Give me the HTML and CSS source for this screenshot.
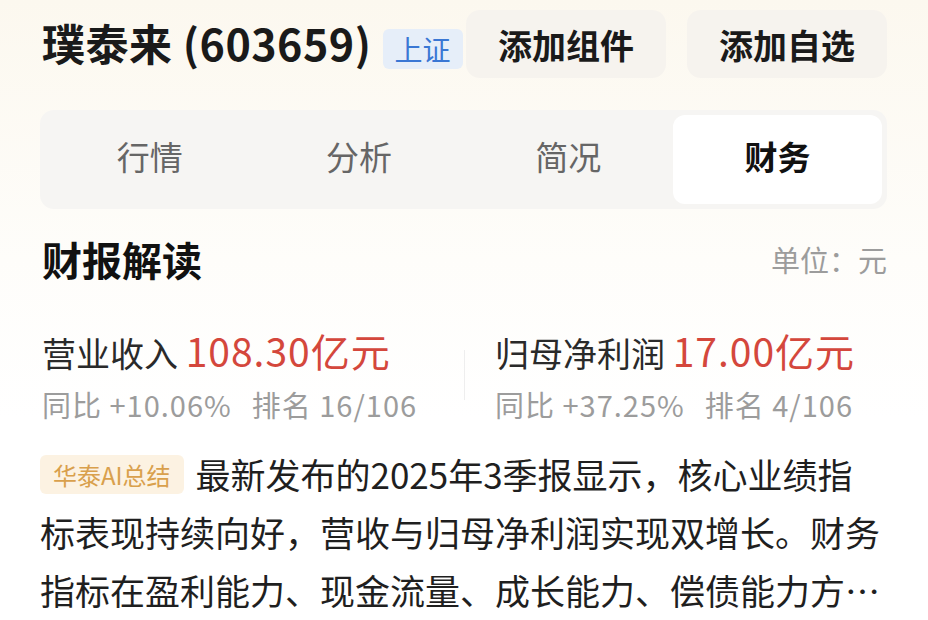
FILE: index.html
```html
<!doctype html>
<html lang="zh">
<head>
    <meta charset="utf-8">
    <title>璞泰来 财务</title>
    <link rel="stylesheet" href="styles.css">
</head>
<body>
	<div id="pagina">
		<div class="cabecera">
			<h1 class="nombre">璞泰来 (603659)</h1>
			<span class="mercado">上证</span>
			<div class="acciones">
				<button class="boton">添加组件</button>
				<button class="boton">添加自选</button>
			</div>
		</div>

		<div class="pestanas">
			<div class="pestana">行情</div>
			<div class="pestana">分析</div>
			<div class="pestana">简况</div>
			<div class="pestana activa">财务</div>
		</div>

		<div class="seccion">
			<h2>财报解读</h2>
			<span class="unidad">单位：元</span>
		</div>

		<div class="metricas">
			<div class="metrica">
				<div class="linea">营业收入 <span class="valor">108.30亿元</span></div>
				<div class="detalle"><span class="dato">同比 +10.06%</span>排名 16/106</div>
			</div>
			<div class="separador"></div>
			<div class="metrica derecha">
				<div class="linea">归母净利润 <span class="valor">17.00亿元</span></div>
				<div class="detalle"><span class="dato">同比 +37.25%</span>排名 4/106</div>
			</div>
		</div>

		<p class="resumen"><span class="etiqueta">华泰AI总结</span> 最新发布的2025年3季报显示，核心业绩指标表现持续向好，营收与归母净利润实现双增长。财务指标在盈利能力、现金流量、成长能力、偿债能力方面表现良好，整体经营稳健。</p>
	</div>
</body>
</html>
```

FILE: styles.css
```css
body{
	margin: 0;
	background: linear-gradient(#fcf8ef, #fefdfa 260px, #ffffff 420px);
	font-family: "Noto Sans CJK SC", "Noto Sans", sans-serif;
	color: #1f1f1f;
}
#pagina{
	padding: 10px 41px 0 40px;
	height: 610px;
	overflow: hidden;
}
.cabecera{
	display: flex;
	align-items: center;
	height: 68px;
}
.nombre{
	margin: 0 0 4px 2px;
	font-size: 43px;
	font-weight: 600;
	letter-spacing: 0.5px;
	color: #1a1a1a;
}
.mercado{
	margin: 10px 0 0 11px;
	padding: 0 12px;
	height: 40px;
	line-height: 40px;
	border-radius: 6px;
	background-color: #e6eef9;
	color: #3a77d4;
	font-size: 28px;
}
.acciones{
	display: flex;
	gap: 21px;
	margin-left: auto;
}
.boton{
	width: 200px;
	height: 68px;
	border: none;
	border-radius: 14px;
	background-color: #f6f3ee;
	font-family: inherit;
	font-size: 34px;
	font-weight: 600;
	color: #1a1a1a;
}
.pestanas{
	display: grid;
	grid-template-columns: repeat(4, 1fr);
	margin-top: 32px;
	padding: 5px;
	height: 89px;
	border-radius: 14px;
	background-color: #f6f5f3;
}
.pestana{
	display: flex;
	align-items: center;
	justify-content: center;
	padding-bottom: 8px;
	font-size: 33px;
	color: #666;
}
.activa{
	background-color: #fff;
	border-radius: 12px;
	font-weight: 700;
	color: #111;
}
.seccion{
	display: flex;
	align-items: center;
	justify-content: space-between;
	height: 100px;
	padding-left: 2px;
}
.seccion h2{
	margin: 0;
	font-size: 40px;
	font-weight: 700;
	color: #111;
}
.unidad{
	font-size: 29px;
	color: #9c9c9c;
}
.metricas{
	display: grid;
	grid-template-columns: 1fr 1px 1fr;
	align-items: center;
	padding: 17px 0 0 2px;
}
.metrica{
	display: flex;
	flex-direction: column;
	gap: 7px;
}
.derecha{
	padding-left: 30px;
}
.separador{
	height: 50px;
	background-color: #eeeeee;
}
.linea{
	font-size: 34px;
	color: #2a2a2a;
	line-height: 48px;
	white-space: nowrap;
}
.valor{
	color: #d4473c;
	font-size: 39px;
	letter-spacing: 1px;
}
.detalle{
	font-size: 29px;
	color: #9c9c9c;
	line-height: 40px;
	letter-spacing: 1px;
	white-space: nowrap;
}
.dato{
	margin-right: 20px;
}
.resumen{
	margin: 21px 0 0 0;
	font-size: 35px;
	line-height: 58px;
	color: #1f1f1f;
	display: -webkit-box;
	-webkit-box-orient: vertical;
	-webkit-line-clamp: 3;
	overflow: hidden;
}
.etiqueta{
	display: inline-block;
	vertical-align: 4px;
	padding: 0 13px;
	height: 39px;
	line-height: 39px;
	border-radius: 6px;
	background-color: #fcf2e2;
	color: #d9a04c;
	font-size: 24px;
	margin-right: 4px;
}
```
